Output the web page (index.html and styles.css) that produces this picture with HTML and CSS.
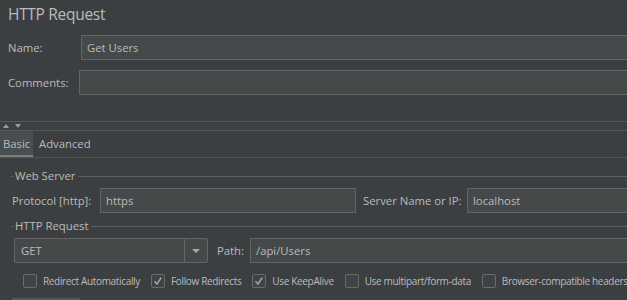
FILE: index.html
```html
<!DOCTYPE html>
<html lang="en">
<head>
  <meta charset="UTF-8" />
  <title>HTTP Request</title>
  <link rel="stylesheet" href="styles.css">
</head>
<body>
  <div class="editor">
    <h1 class="title">HTTP Request</h1>

    <div class="field-row name-row">
      <label>Name:</label>
      <div class="input">Get Users</div>
    </div>
    <div class="field-row comments-row">
      <label>Comments:</label>
      <div class="input"></div>
    </div>

    <div class="splitter">
      <span class="arrow up"></span>
      <span class="arrow down"></span>
    </div>

    <div class="tabs">
      <span class="tab active">Basic</span>
      <span class="tab">Advanced</span>
    </div>

    <div class="group server-group">
      <div class="group-title">Web Server</div>
      <div class="field-row server-row">
        <label class="protocol-label">Protocol [http]:</label>
        <div class="input protocol-input">https</div>
        <label class="host-label">Server Name or IP:</label>
        <div class="input">localhost</div>
      </div>
    </div>

    <div class="group request-group">
      <div class="group-title">HTTP Request</div>
      <div class="field-row request-row">
        <div class="combo">
          <span class="combo-value">GET</span>
          <span class="combo-button"><span class="combo-arrow"></span></span>
        </div>
        <label class="path-label">Path:</label>
        <div class="input">/api/Users</div>
      </div>
      <div class="checks">
        <span class="check"><span class="box"></span>Redirect Automatically</span>
        <span class="check"><span class="box checked"><svg viewBox="0 0 14 14" width="14" height="14"><path d="M3.5 7.2 L6 10 L10.3 3.6" /></svg></span>Follow Redirects</span>
        <span class="check"><span class="box checked"><svg viewBox="0 0 14 14" width="14" height="14"><path d="M3.5 7.2 L6 10 L10.3 3.6" /></svg></span>Use KeepAlive</span>
        <span class="check"><span class="box"></span>Use multipart/form-data</span>
        <span class="check"><span class="box"></span>Browser-compatible headers</span>
      </div>
      <div class="params-tab"></div>
    </div>
  </div>
</body>
</html>
```

FILE: styles.css
```css
* {
  box-sizing: border-box;
  margin: 0;
  padding: 0;
}

body {
  background: #3c3f41;
  color: #bbbbbb;
  font-family: 'Open Sans', 'Noto Sans', sans-serif;
  font-size: 11.3px;
  overflow: hidden;
}

.editor {
  width: 627px;
  height: 300px;
  overflow: hidden;
}

.title {
  height: 35px;
  line-height: 29px;
  padding-left: 8px;
  font-size: 15.5px;
  font-weight: 400;
  letter-spacing: -0.3px;
}

.field-row {
  display: flex;
  align-items: center;
  height: 25px;
}

.field-row label {
  line-height: 16px;
  white-space: nowrap;
}

.name-row label {
  width: 81px;
  padding-left: 8px;
}

.comments-row {
  margin-top: 10px;
}

.comments-row label {
  width: 79px;
  padding-left: 8px;
}

.input {
  flex: 1;
  height: 25px;
  line-height: 23px;
  padding-left: 5px;
  background: #45494a;
  border: 1px solid #646464;
  margin-right: -4px;
  white-space: nowrap;
}

/* splitter between the header and the tabs */
.splitter {
  margin-top: 26px;
  height: 10px;
  border-top: 1px solid #555859;
  border-bottom: 1px solid #555859;
  display: flex;
  align-items: center;
  gap: 6px;
  padding-left: 3px;
}

.arrow {
  width: 0;
  height: 0;
  border-left: 3px solid transparent;
  border-right: 3px solid transparent;
}

.arrow.up {
  border-bottom: 4px solid #9c9c9c;
}

.arrow.down {
  border-top: 4px solid #9c9c9c;
}

.tabs {
  display: flex;
  height: 27px;
  border-bottom: 1px solid #505456;
}

.tab {
  height: 26px;
  padding: 2px 6px 0;
  line-height: 22px;
}

.tab.active {
  width: 33px;
  padding: 2px 0 0 3px;
  background: #494d4f;
  border-bottom: 2px solid #7b7f82;
}

.group-title {
  display: flex;
  align-items: center;
  height: 16px;
  line-height: 16px;
  padding-left: 11px;
  white-space: nowrap;
}

.group-title::before {
  content: '';
  width: 3px;
  height: 1px;
  margin-right: 1px;
  background: #5b5e60;
}

.group-title::after {
  content: '';
  flex: 1;
  height: 1px;
  margin-left: 3px;
  background: #5b5e60;
}

.server-group .group-title {
  margin-top: 10px;
}

.server-row {
  margin-top: 4px;
  padding-left: 12px;
}

.protocol-label {
  width: 88px;
}

.protocol-input {
  flex: 0 0 256px;
  margin-right: 7px;
}

.host-label {
  width: 104px;
}

.request-group .group-title {
  margin-top: 5px;
}

.request-row {
  margin-top: 4px;
  padding-left: 14px;
}

.combo {
  display: flex;
  width: 194px;
  height: 25px;
  background: #45494a;
  border: 1px solid #646464;
  border-radius: 2px;
  margin-right: 9px;
}

.combo-value {
  flex: 1;
  padding-left: 6px;
  line-height: 23px;
}

.combo-button {
  width: 23px;
  border-left: 1px solid #646464;
  display: flex;
  align-items: center;
  justify-content: center;
}

.combo-arrow {
  width: 0;
  height: 0;
  border-left: 4px solid transparent;
  border-right: 4px solid transparent;
  border-top: 4px solid #a9a9a9;
}

.path-label {
  width: 33px;
}

.checks {
  display: flex;
  margin-top: 11px;
  padding-left: 23px;
  font-size: 10px;
  letter-spacing: -0.34px;
  white-space: nowrap;
}

.check {
  display: flex;
  align-items: center;
  gap: 6px;
  margin-right: 11px;
  height: 14px;
}

.box {
  width: 14px;
  height: 14px;
  border: 1px solid #6b6b6b;
  border-radius: 2px;
  background: #3f4344;
  position: relative;
}

.box svg {
  position: absolute;
  left: -1px;
  top: -1px;
  fill: none;
  stroke: #a4a4a4;
  stroke-width: 1.6;
}

.params-tab {
  margin: 10px 0 0 12px;
  width: 68px;
  height: 3px;
  background: #55595b;
}
```
